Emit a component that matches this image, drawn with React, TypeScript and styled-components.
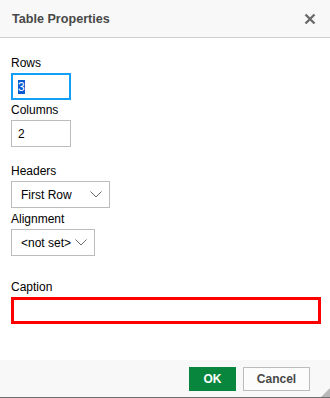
import styled, { createGlobalStyle } from 'styled-components'

const Global = createGlobalStyle`
  html, body {
    margin: 0;
    padding: 0;
    background: #fff;
  }
  body {
    font-family: "Liberation Sans", Arial, sans-serif;
    font-size: 12px;
    color: #000;
  }
`

const Dialog = styled.div`
  position: relative;
  width: 330px;
  height: 398px;
  display: flex;
  flex-direction: column;
  background: #fff;
  border-bottom: 1px solid #6d6d6d;
  box-sizing: border-box;
  overflow: hidden;
`

const Header = styled.div`
  height: 37px;
  display: flex;
  align-items: center;
  justify-content: space-between;
  padding: 0 14px 0 12px;
  background: #f8f8f8;
  border-bottom: 1px solid #d1d1d1;
`

const Title = styled.div`
  font-weight: bold;
  font-size: 12.6px;
  color: #484848;
`

const Close = styled.svg`
  width: 12px;
  height: 12px;
`

const Body = styled.div`
  flex: 1;
  padding: 17px 10px 0 11px;
  display: flex;
  flex-direction: column;
`

const Field = styled.div<{ $gap?: number }>`
  display: flex;
  flex-direction: column;
  margin-top: ${({ $gap }) => $gap ?? 0}px;
`

const Label = styled.label`
  font-size: 12px;
  line-height: 16px;
  margin-bottom: 2px;
`

const TextInput = styled.div<{ $focus?: boolean; $error?: boolean; $w?: string }>`
  box-sizing: border-box;
  width: ${({ $w }) => $w ?? '60px'};
  height: 27px;
  display: flex;
  align-items: center;
  padding-left: ${({ $focus, $error }) => ($focus || $error ? 5 : 6)}px;
  border: ${({ $focus, $error }) =>
    $error ? '3px solid #ff0000' : $focus ? '2px solid #139ff7' : '1px solid #bcbcbc'};
  font-size: 12px;
  color: #000;
`

const Selected = styled.span`
  background: #0a5ad1;
  color: #fff;
`

const Select = styled.div<{ $w: number }>`
  box-sizing: border-box;
  width: ${({ $w }) => $w}px;
  height: 27px;
  display: flex;
  align-items: center;
  justify-content: space-between;
  padding: 0 7px 0 9px;
  border: 1px solid #bcbcbc;
  font-size: 12px;
`

const Footer = styled.div`
  height: 37px;
  background: #f8f8f8;
  display: flex;
  align-items: flex-start;
  justify-content: flex-end;
  gap: 7px;
  padding: 7px 20px 0 0;
  box-sizing: border-box;
`

const Button = styled.div<{ $primary?: boolean }>`
  box-sizing: border-box;
  height: 24px;
  display: flex;
  align-items: center;
  justify-content: center;
  font-weight: bold;
  font-size: 12px;
  ${({ $primary }) =>
    $primary
      ? `width: 47px; background: #09863e; color: #fff; border: 1px solid #09863e;`
      : `width: 67px; background: #fcfcfc; color: #484848; border: 1px solid #bcbcbc;`}
`

const Grip = styled.svg`
  position: absolute;
  right: 0;
  bottom: 0;
  width: 9px;
  height: 9px;
`

function Chevron() {
  return (
    <svg width="12" height="7" viewBox="0 0 12 7">
      <path d="M0.5 0.5 L6 6 L11.5 0.5" fill="none" stroke="#6b6b6b" strokeWidth="1" />
    </svg>
  )
}

export default function App() {
  return (
    <>
      <Global />
      <Dialog>
        <Header>
          <Title>Table Properties</Title>
          <Close viewBox="0 0 12 12">
            <path d="M1.5 1.5 L10.5 10.5 M10.5 1.5 L1.5 10.5" stroke="#6b6b6b" strokeWidth="2.4" />
          </Close>
        </Header>
        <Body>
          <Field>
            <Label>Rows</Label>
            <TextInput $focus>
              <Selected>3</Selected>
            </TextInput>
          </Field>
          <Field $gap={2}>
            <Label>Columns</Label>
            <TextInput>2</TextInput>
          </Field>
          <Field $gap={16}>
            <Label>Headers</Label>
            <Select $w={99}>
              First Row
              <Chevron />
            </Select>
          </Field>
          <Field $gap={3}>
            <Label>Alignment</Label>
            <Select $w={84}>
              &lt;not set&gt;
              <Chevron />
            </Select>
          </Field>
          <Field $gap={23}>
            <Label>Caption</Label>
            <TextInput $error $w="310px" />
          </Field>
        </Body>
        <Footer>
          <Button $primary>OK</Button>
          <Button>Cancel</Button>
        </Footer>
        <Grip viewBox="0 0 9 9">
          <path d="M9 0 L9 9 L0 9 Z" fill="#b8b8b8" />
        </Grip>
      </Dialog>
    </>
  )
}
